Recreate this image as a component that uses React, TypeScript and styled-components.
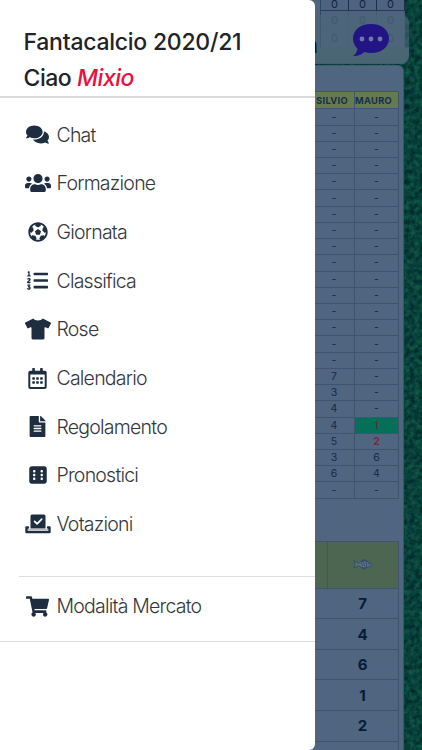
import React from 'react';
import styled, { createGlobalStyle, css } from 'styled-components';
import {
  FaComments, FaUsers, FaFutbol, FaListOl, FaTshirt, FaRegCalendarAlt,
  FaFileAlt, FaDiceSix, FaShoppingCart,
} from 'react-icons/fa';

const line = '#3e546f';

const GlobalStyle = createGlobalStyle`
  * { box-sizing: border-box; }
  body { margin: 0; overflow: hidden; font-family: Inter, "Liberation Sans", sans-serif; }
`;

const Screen = styled.div`
  position: relative;
  width: 422px;
  height: 750px;
  overflow: hidden;
  background: #06403f;
`;

const Grass = styled.svg`
  position: absolute;
  inset: 0;
  width: 100%;
  height: 100%;
`;

const Page = styled.main`
  position: relative;
  width: 404px;
  height: 750px;
  display: flex;
  flex-direction: column;
  gap: 1px;
`;

const ScoreCard = styled.section`
  height: 64px;
  flex: none;
  background: #4d637e;
`;

const ScoreGrid = styled.div`
  margin-left: 320px;
  width: 85px;
  height: 48px;
  display: grid;
  grid-template-columns: repeat(3, 28px);
  grid-template-rows: 11px 18px 19px;
  border-left: 1px solid #304763;
`;

const ScoreCell = styled.div<{ $faded: boolean }>`
  border-right: 1px solid ${({ $faded }) => ($faded ? '#435b73' : '#1a2f4b')};
  border-bottom: 1px solid ${({ $faded }) => ($faded ? '#48607a' : '#263c58')};
  color: ${({ $faded }) => ($faded ? '#2b4261' : '#10233f')};
  font-size: 11px;
  line-height: 8px;
  display: flex;
  align-items: ${({ $faded }) => ($faded ? 'center' : 'flex-start')};
  justify-content: center;
`;

const StandingsCard = styled.section`
  flex: 1;
  padding: 25px 4px 0 0;
  border-radius: 0 6px 0 0;
  border-right: 1px solid #3d5471;
  border-top: 1px solid #425b73;
  background: #4f6580;
  display: flex;
  flex-direction: column;
  align-items: flex-end;
  gap: 42px;
`;

const ResultTable = styled.div`
  width: 99px;
  display: grid;
  grid-template-columns: 55px 44px;
  grid-template-rows: 17.4px repeat(24, 16.22px);
  border-top: 1px solid ${line};
`;

const cell = css`
  display: flex;
  align-items: center;
  justify-content: center;
  border-right: 1px solid ${line};
  border-bottom: 1px solid ${line};
`;

const NameCell = styled.div`
  ${cell}
  background: #667a50;
  color: #172f4c;
  font-size: 9.3px;
  font-weight: 700;
  letter-spacing: 0.3px;
  &:first-child { padding-left: 10px; }
  &:nth-child(2) { padding-right: 6px; }
`;

const ResultCell = styled.div<{ $tone?: 'win' | 'red' }>`
  ${cell}
  color: ${({ $tone }) => ($tone ? '#7a2839' : '#152b47')};
  background: ${({ $tone }) => ($tone === 'win' ? '#027158' : 'transparent')};
  font-size: 10.5px;
  font-weight: ${({ $tone }) => ($tone ? 700 : 400)};
  &:nth-child(odd) { padding-left: 14px; }
`;

const PointsTable = styled.div`
  width: 99px;
  display: grid;
  grid-template-columns: 28px 71px;
  grid-template-rows: 47px repeat(6, 30.6px);
  border-top: 1px solid ${line};
`;

const PointsHead = styled.div`
  ${cell}
  background: #4d6652;
`;

const PointsCell = styled.div`
  ${cell}
  grid-column: 1 / -1;
  padding-left: 27px;
  color: #071b36;
  font-size: 15px;
  font-weight: 700;
`;

const TopBar = styled.header`
  position: absolute;
  left: 0;
  top: 15px;
  width: 409px;
  height: 49px;
  border-radius: 0 8px 8px 0;
  background: linear-gradient(rgba(76, 102, 120, 0.6) 32px, #4a6675 33px);
  border-bottom: 1px solid #3d6270;
  display: flex;
  align-items: center;
  justify-content: flex-end;
  padding-right: 19px;
`;

const BarTitle = styled.span`
  color: #071b36;
  font-size: 24px;
  font-weight: 700;
  margin-right: 34px;
  padding-top: 10px;
`;

const ChatBubble = styled.svg`
  width: 38px;
  height: 34px;
  margin-top: 1px;
`;

const Drawer = styled.nav`
  position: absolute;
  left: 0;
  top: 0;
  width: 315px;
  height: 750px;
  background: #fff;
  border-radius: 0 6px 6px 0;
  display: flex;
  flex-direction: column;
`;

const Heading = styled.header`
  height: 98px;
  padding: 24px 0 0 23.5px;
  border-bottom: 2px solid #dadada;
  color: #202428;
  font-size: 23px;
  font-weight: 460;
  line-height: 36px;
  letter-spacing: -0.25px;
`;

const Greeting = styled.div`
  letter-spacing: -0.45px;
`;

const User = styled.em`
  color: #e9103f;
`;

const MenuList = styled.div`
  display: flex;
  flex-direction: column;
  padding: 12.5px 0 0 24px;
  height: 478px;
`;

const MenuItem = styled.a`
  height: 48.65px;
  display: grid;
  grid-template-columns: 27px 1fr;
  column-gap: 5.5px;
  align-items: center;
  color: #34383d;
  font-size: 19.5px;
  font-weight: 300;
  letter-spacing: -0.78px;
`;

const IconSlot = styled.span<{ $size: number }>`
  display: flex;
  justify-content: center;
  color: #1e2e40;
  font-size: ${({ $size }) => $size}px;
  svg { flex: none; }
`;

const MarketArea = styled.div`
  height: 65px;
  padding: 5px 0 0 5px;
  margin-left: 19px;
  border-top: 1px solid #dedede;
`;

const Divider = styled.hr`
  width: 100%;
  margin: 0;
  border: 0;
  border-top: 1px solid #dedede;
`;

const BallotIcon = () => (
  <svg width="26" height="20" viewBox="0 0 26 20" fill="none">
    <path d="M7 .5h12q1.500 0 1.500 1.500V14.500h-15V2Q5.500.5 7 .5Z" fill="currentColor" />
    <path d="m9.600 7.300 2.500 2.500 4.600-4.700" stroke="#fff" strokeWidth="1.700" strokeLinecap="round" strokeLinejoin="round" />
    <path d="M3 13.500H1.500V18h23v-4.500H23" stroke="currentColor" strokeWidth="2.400" strokeLinecap="round" strokeLinejoin="round" />
    <path d="M3 15.500h20" stroke="#b7bdc5" strokeWidth="1.200" />
  </svg>
);

const menu = [
  { label: 'Chat', icon: <FaComments />, size: 23 },
  { label: 'Formazione', icon: <FaUsers />, size: 26 },
  { label: 'Giornata', icon: <FaFutbol />, size: 20 },
  { label: 'Classifica', icon: <FaListOl />, size: 21 },
  { label: 'Rose', icon: <FaTshirt />, size: 26 },
  { label: 'Calendario', icon: <FaRegCalendarAlt />, size: 21 },
  { label: 'Regolamento', icon: <FaFileAlt />, size: 21 },
  { label: 'Pronostici', icon: <FaDiceSix />, size: 20 },
  { label: 'Votazioni', icon: <BallotIcon />, size: 25 },
];

const silvio = [...Array(16).fill('-'), '7', '3', '4', '4', '5', '3', '6', '-'];
const mauro = [...Array(19).fill('-'), '1', '2', '6', '4', '-'];

const Fish = () => (
  <svg width="20" height="11" viewBox="0 0 20 11" fill="#5b7189" stroke="#2a4566" strokeWidth="0.8">
    <path d="M1 1.5 5.5 4.6C9 1 15 .8 19 5.5 15 10 9 9.6 5.5 6.5L1 9.2 2.2 5.4Z" />
    <path d="m8 2.6 3-2 3 1.3M9 8.5l1.5 1.8 2-1.2M8 4l2 3M10 3l2 4M13 2.5c1 2 1 4 0 6" fill="none" />
    <circle cx="16" cy="4.8" r=".5" />
  </svg>
);

export default function App() {
  return (
    <Screen>
      <GlobalStyle />
      <Grass>
        <filter id="grass" x="0" y="0" width="100%" height="100%" colorInterpolationFilters="sRGB">
          <feTurbulence type="fractalNoise" baseFrequency="0.2" numOctaves="3" seed="8" />
          <feColorMatrix values="0.12 0 0 0 -0.03  0.32 0 0 0 0.095  0.16 0.05 0 0 0.12  0 0 0 0 1" />
        </filter>
        <rect width="100%" height="100%" filter="url(#grass)" />
      </Grass>
      <Page>
        <ScoreCard>
          <ScoreGrid>
            {Array.from({ length: 9 }, (_, i) => <ScoreCell key={i} $faded={i > 2}>0</ScoreCell>)}
          </ScoreGrid>
        </ScoreCard>
        <StandingsCard>
          <ResultTable>
            <NameCell>SILVIO</NameCell>
            <NameCell>MAURO</NameCell>
            {silvio.map((value, i) => (
              <React.Fragment key={i}>
                <ResultCell>{value}</ResultCell>
                <ResultCell $tone={i === 19 ? 'win' : i === 20 ? 'red' : undefined}>{mauro[i]}</ResultCell>
              </React.Fragment>
            ))}
          </ResultTable>
          <PointsTable>
            <PointsHead />
            <PointsHead><Fish /></PointsHead>
            {['7', '4', '6', '1', '2', ''].map((points, i) => <PointsCell key={i}>{points}</PointsCell>)}
          </PointsTable>
        </StandingsCard>
      </Page>
      <TopBar>
        <BarTitle>a</BarTitle>
        <ChatBubble viewBox="0 0 38 34">
          <path d="M19 1C8.500 1 1 7 1 15.500c0 4 1.500 7.500 4.500 10C5.200 28.500 3.500 31 1 33c4.500.3 8.500-1.300 11.200-4 2 .7 4.300 1 6.800 1 10.500 0 18-6 18-14.500S29.500 1 19 1Z" fill="#231486" />
          <g fill="#6c7ba5"><circle cx="10" cy="16" r="2.400" /><circle cx="19" cy="16" r="2.400" /><circle cx="28" cy="16" r="2.400" /></g>
        </ChatBubble>
      </TopBar>
      <Drawer>
        <Heading>
          <div>Fantacalcio 2020/21</div>
          <Greeting>Ciao <User>Mixio</User></Greeting>
        </Heading>
        <MenuList>
          {menu.map(({ label, icon, size }) => (
            <MenuItem key={label}><IconSlot $size={size}>{icon}</IconSlot>{label}</MenuItem>
          ))}
        </MenuList>
        <MarketArea>
          <MenuItem><IconSlot $size={23}><FaShoppingCart /></IconSlot>Modalità Mercato</MenuItem>
        </MarketArea>
        <Divider />
      </Drawer>
    </Screen>
  );
}
